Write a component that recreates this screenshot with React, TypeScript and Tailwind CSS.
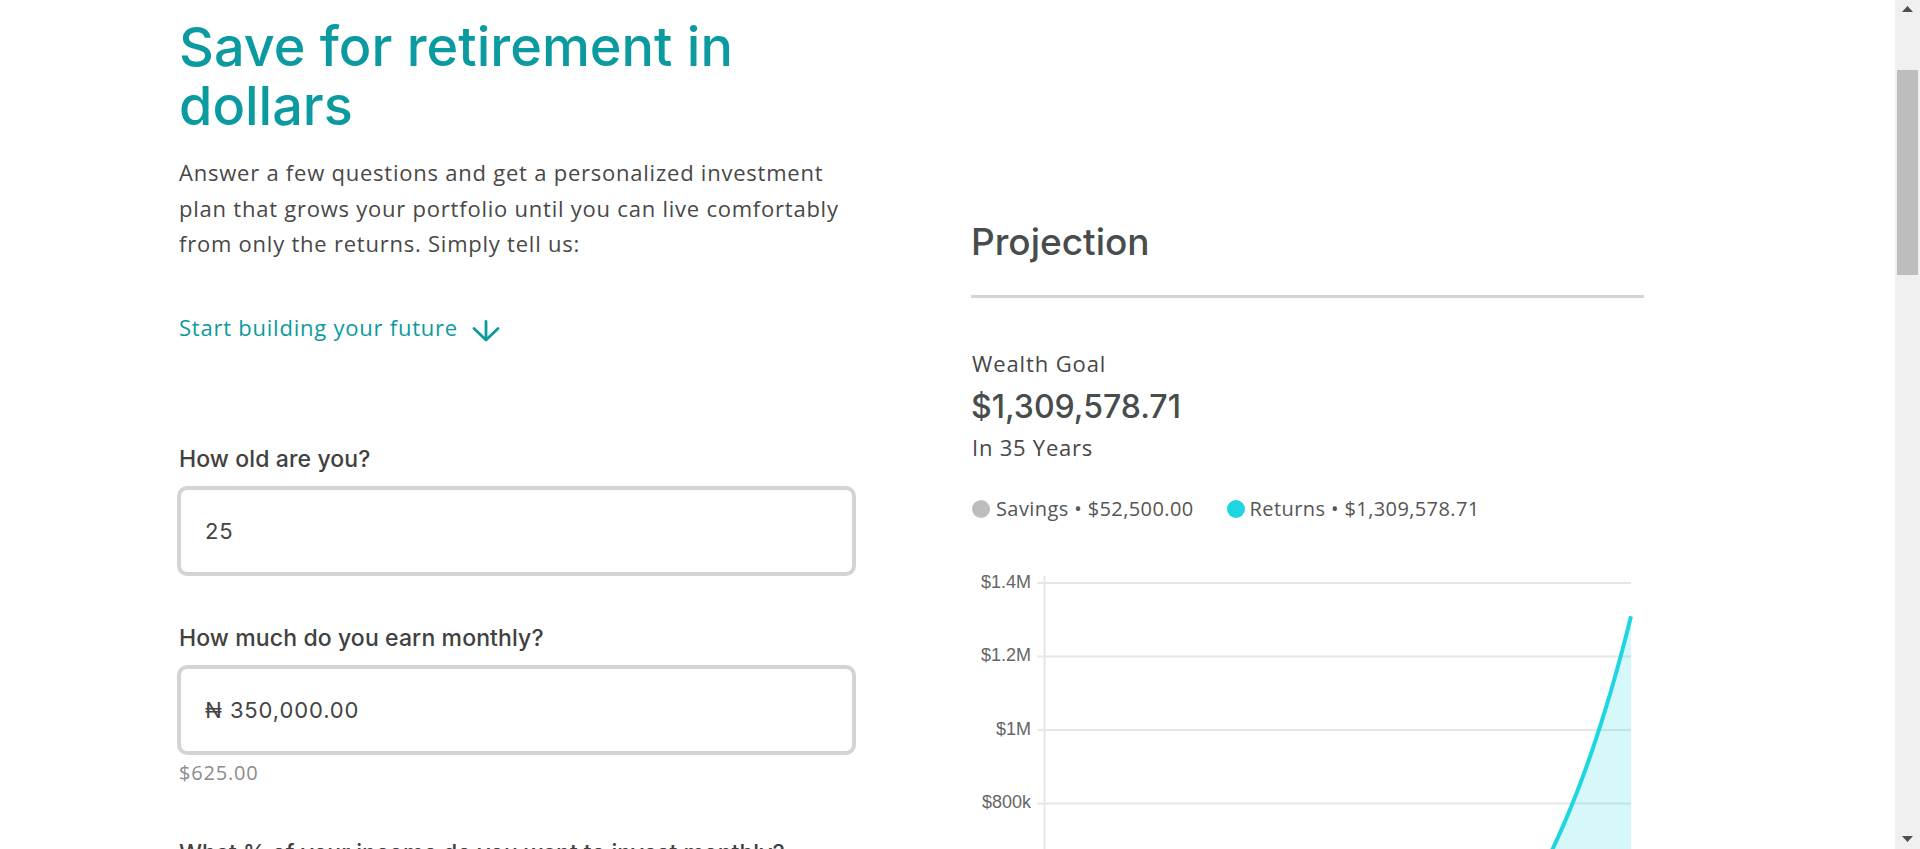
import React from "react";

const TEAL = "#0b9aa0";

function Chart() {
  const W = 673;
  const H = 560;
  const x0 = 73.5;
  const x1 = 660;
  const y0 = 537.5;
  const step = 73.5;
  const xs = (t: number) => x0 + (t * (x1 - x0)) / 35;
  const ys = (v: number) => y0 - (v / 200000) * step;
  const total = 1309578.71;
  const ret = (t: number) => (total * (Math.pow(1.15, t) - 1)) / (Math.pow(1.15, 35) - 1);
  const pts: string[] = [];
  for (let i = 0; i <= 140; i++) {
    const t = i / 4;
    pts.push(`${xs(t).toFixed(2)},${ys(ret(t)).toFixed(2)}`);
  }
  const line = "M" + pts.join(" L");
  const area = line + ` L${x1},${y0} L${x0},${y0} Z`;
  const sav = `M${x0},${y0} L${x1},${ys(52500)}`;
  const savArea = sav + ` L${x1},${y0} Z`;
  const labels = ["$1.4M", "$1.2M", "$1M", "$800k", "$600k", "$400k", "$200k", "$0"];
  return (
    <svg width={W} height={H} viewBox={`0 0 ${W} ${H}`} className="block shrink-0">
      {labels.map((l, i) => {
        const y = y0 - (7 - i) * step;
        return (
          <g key={l}>
            <line x1={x0 - 7} x2={x1} y1={y} y2={y} stroke="#e6e6e6" strokeWidth={2} />
            <text
              x={60}
              y={y}
              textAnchor="end"
              dominantBaseline="middle"
              fontFamily="'Liberation Sans', Arial, sans-serif"
              fontSize={18}
              fill="#666666"
            >
              {l}
            </text>
          </g>
        );
      })}
      <line x1={x0} x2={x0} y1={16} y2={y0 + 7} stroke="#e6e6e6" strokeWidth={2} />
      <path d={area} fill="rgba(30,214,226,0.18)" />
      <path d={savArea} fill="rgba(189,189,189,0.3)" />
      <path d={line} fill="none" stroke="#1ed6e2" strokeWidth={4} strokeLinejoin="round" />
      <path d={sav} fill="none" stroke="#bdbdbd" strokeWidth={4} />
    </svg>
  );
}

function Scrollbar() {
  return (
    <div className="w-[25px] shrink-0 bg-[#f0f0f0] flex flex-col items-center">
      <svg width="11" height="6" viewBox="0 0 11 6" className="mt-[6px] shrink-0">
        <path d="M0 6 L5.5 0 L11 6 Z" fill="#505050" />
      </svg>
      <div className="mt-[58px] h-[205px] w-[21px] bg-[#bdbdbd] shrink-0" />
      <div className="flex-1" />
      <svg width="11" height="6" viewBox="0 0 11 6" className="mb-[7px] shrink-0">
        <path d="M0 0 L5.5 6 L11 0 Z" fill="#505050" />
      </svg>
    </div>
  );
}

function Field({ label, value, note, first }: { label: string; value: string; note?: string; first?: boolean }) {
  return (
    <div className={first ? "mt-[98px]" : "mt-[46px]"}>
      <div className="ml-[2px] font-['Inter',sans-serif] font-medium text-[23px] leading-[32px] text-[#414141] tracking-[0.005em]">{label}</div>
      <div className="mt-[11px] h-[90px] w-[679px] border-4 border-[#d4d4d4] rounded-[10px] px-[24px] flex items-center">
        <span className="font-['Inter',sans-serif] text-[22px] text-[#444444] tracking-[0.04em]">{value}</span>
      </div>
      {note && (
        <div className="ml-[2px] mt-[4px] font-['Open_Sans',sans-serif] text-[20px] leading-[28px] text-[#8c8c8c] tracking-[0.04em]">{note}</div>
      )}
    </div>
  );
}

export default function App() {
  return (
    <div className="flex h-[849px] w-full overflow-hidden bg-white">
      <div className="flex-1 overflow-hidden">
        <div className="flex pl-[177px] pt-[17px] gap-[115px]">
          <div className="w-[679px] shrink-0">
            <h1 className="ml-[2px] font-['Inter',sans-serif] font-medium text-[54px] leading-[59px] text-[#0b9aa0]">
              Save for retirement in
              <br />
              dollars
            </h1>
            <p className="ml-[2px] mt-[20px] font-['Open_Sans',sans-serif] text-[22px] leading-[35.5px] text-[#484848] tracking-[0.035em] whitespace-nowrap">
              Answer a few questions and get a personalized investment
              <br />
              plan that grows your portfolio until you can live comfortably
              <br />
              from only the returns. Simply tell us:
            </p>
            <div className="ml-[2px] mt-[48px] flex items-center font-['Open_Sans',sans-serif] text-[22px] leading-[35.5px] tracking-[0.035em]" style={{ color: TEAL }}>
              <span>Start building your future</span>
              <svg width="28" height="22" viewBox="0 0 28 22" className="ml-[14px] mt-[8px]" fill="none" stroke={TEAL} strokeWidth="2.8" strokeLinecap="round" strokeLinejoin="round">
                <path d="M14 1.5 V19.5" />
                <path d="M2 8.5 L14 20 L26 8.5" />
              </svg>
            </div>
            <Field first label="How old are you?" value="25" />
            <Field label="How much do you earn monthly?" value="₦ 350,000.00" note="$625.00" />
            <div className="ml-[2px] mt-[50px] font-['Inter',sans-serif] font-medium text-[23px] leading-[32px] text-[#414141] whitespace-nowrap">
              What % of your income do you want to invest monthly?
            </div>
          </div>
          <div className="w-[673px] shrink-0 pt-[203px]">
            <h2 className="font-['Inter',sans-serif] font-medium text-[37px] leading-[44px] text-[#474c4c]">Projection</h2>
            <div className="mt-[31px] h-[3px] bg-[#d4d4d4]" />
            <div className="ml-[1px] mt-[50px] font-['Open_Sans',sans-serif] text-[22px] leading-[30px] text-[#474747] tracking-[0.04em]">Wealth Goal</div>
            <div className="mt-[9px] font-['Inter',sans-serif] font-medium text-[32px] leading-[40px] text-[#474c4c]">$1,309,578.71</div>
            <div className="ml-[1px] mt-[5px] font-['Open_Sans',sans-serif] text-[22px] leading-[30px] text-[#474747] tracking-[0.035em]">In 35 Years</div>
            <div className="ml-[1px] mt-[32px] flex items-center h-[30px] font-['Open_Sans',sans-serif] text-[20px] text-[#555555] tracking-[0.02em]">
              <span className="h-[18px] w-[18px] rounded-full bg-[#bdbdbd]" />
              <span className="ml-[6px]">Savings • $52,500.00</span>
              <span className="ml-[33px] h-[18px] w-[18px] rounded-full bg-[#1ed6e2]" />
              <span className="ml-[5px]">Returns • $1,309,578.71</span>
            </div>
            <div className="mt-[36px]">
              <Chart />
            </div>
          </div>
        </div>
      </div>
      <Scrollbar />
    </div>
  );
}
